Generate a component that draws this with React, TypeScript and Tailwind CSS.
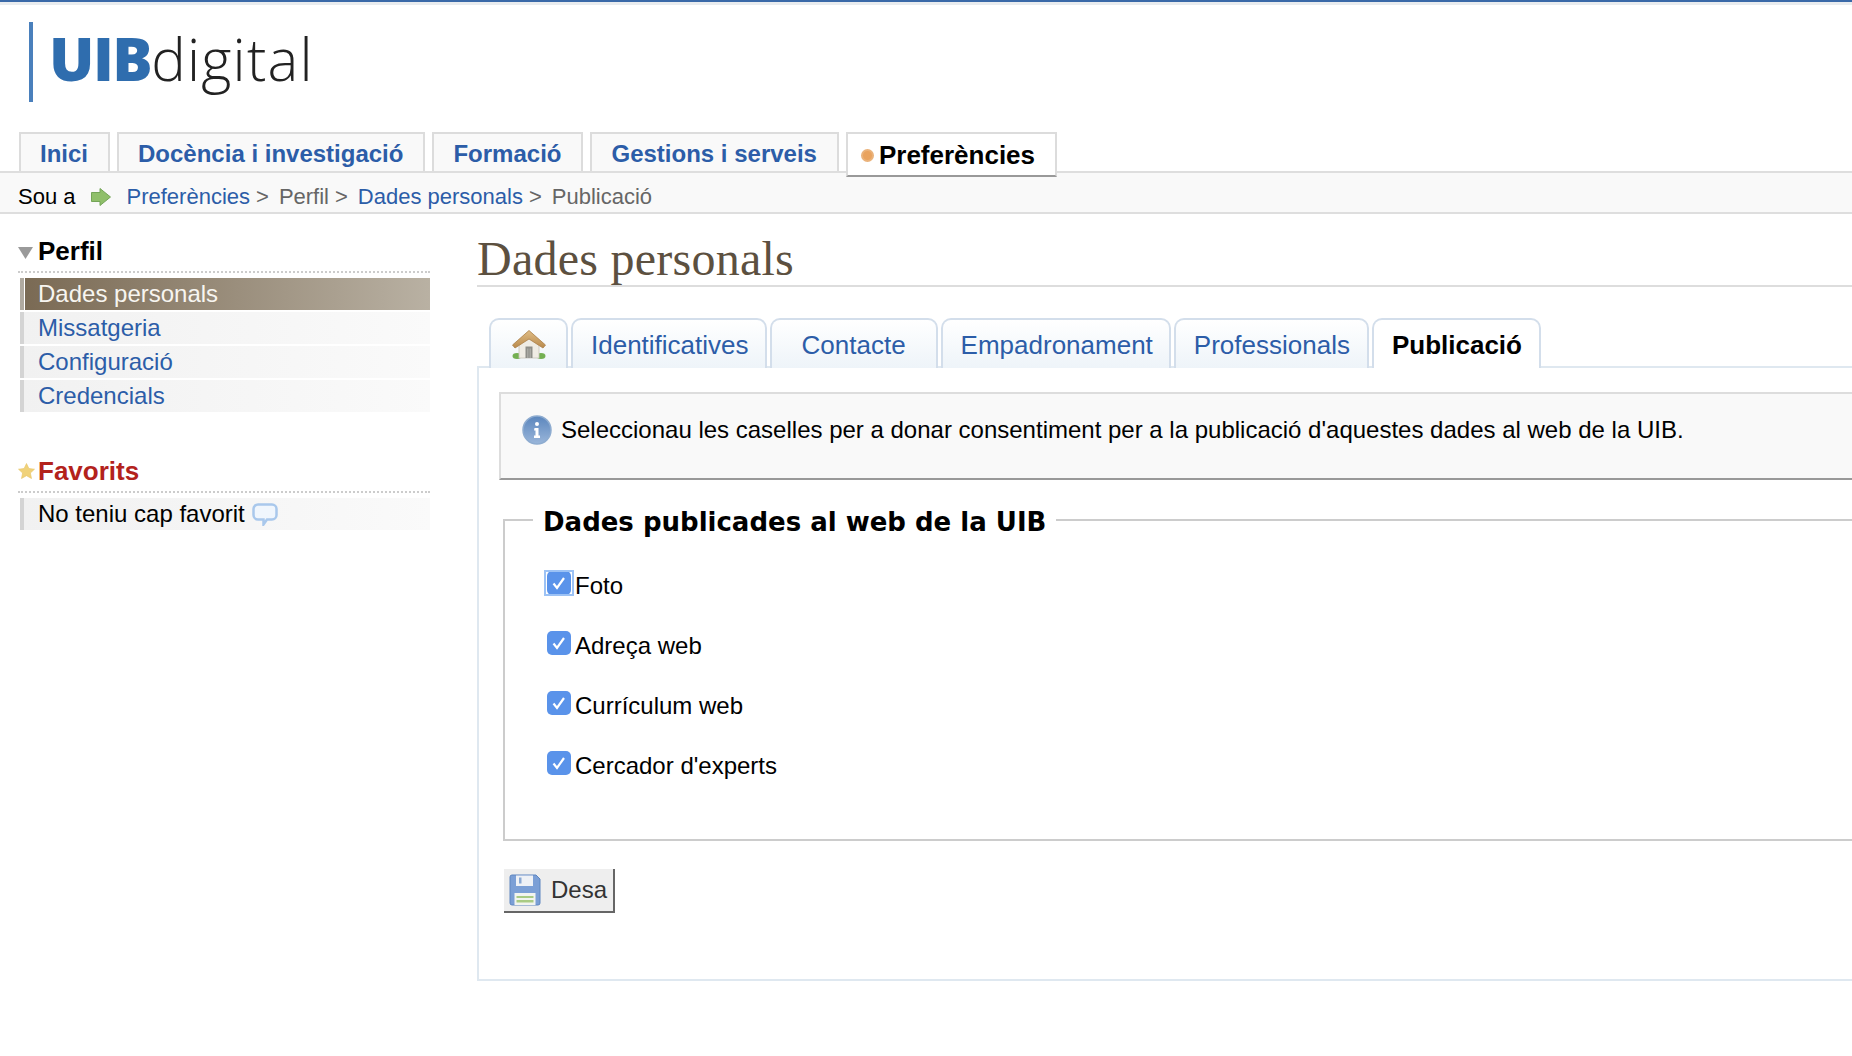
const navTabs = ["Inici", "Docència i investigació", "Formació", "Gestions i serveis"];
const menuItems = ["Missatgeria", "Configuració", "Credencials"];
const subTabs = ["Identificatives", "Contacte", "Empadronament", "Professionals"];
const subTabPadding = ["pl-[18px] pr-[16px]", "px-[30px]", "pl-[18px] pr-[16px]", "pl-[18px] pr-[17px]"];
const checks = ["Foto", "Adreça web", "Currículum web", "Cercador d'experts"];

function ArrowIcon() {
  return (
    <svg width="22" height="20" viewBox="0 0 22 20">
      <path d="M1.500 5.500h8.500V1.500l10.500 8.500-10.500 8.500v-4H1.500z" fill="#8fbf6a" stroke="#74a558" strokeWidth="1" />
    </svg>
  );
}

function HomeIcon() {
  return (
    <svg width="34" height="29" viewBox="0 0 34 29">
      <defs>
        <linearGradient id="roofFill" x1="0" y1="0" x2="0" y2="1">
          <stop offset="0" stopColor="#e0bd86" />
          <stop offset="1" stopColor="#b98a4c" />
        </linearGradient>
      </defs>
      <ellipse cx="5" cy="26" rx="4.500" ry="3" fill="#74b052" />
      <ellipse cx="29" cy="26" rx="4.500" ry="3" fill="#74b052" />
      <path d="M7 12L17 6l10 6v16H7z" fill="#efece4" stroke="#c9c4b8" strokeWidth="0.8" />
      <path d="M13.500 16.500h7V28h-7z" fill="#8e8e88" />
      <path d="M15 18.500h1.500V28H15zM17.500 18.500H19V28h-1.500z" fill="#a8a8a2" />
      <path d="M17 .5L33.500 15 31 18 17 9 3 18 .5 15z" fill="url(#roofFill)" stroke="#ab7f47" strokeWidth="0.8" />
    </svg>
  );
}

function InfoIcon() {
  return (
    <svg width="30" height="30" viewBox="0 0 30 30" className="shrink-0">
      <defs>
        <linearGradient id="infoFill" x1="0" y1="0" x2="0" y2="1">
          <stop offset="0" stopColor="#5b86bd" />
          <stop offset="1" stopColor="#9ab6da" />
        </linearGradient>
      </defs>
      <circle cx="15" cy="15" r="14" fill="url(#infoFill)" stroke="#8eacd0" strokeWidth="1.500" />
      <circle cx="15" cy="9" r="2" fill="#fff" />
      <path d="M12.500 13h4v7.500h1.500V23h-6v-2.500h1.500v-5h-1.500z" fill="#fff" />
    </svg>
  );
}

function StarIcon() {
  return (
    <svg width="17" height="16" viewBox="0 0 17 16">
      <path d="M8.500.5l2.400 5 5.600.7-4.100 3.800 1.100 5.500-5-2.800-5 2.800 1.100-5.500L.5 6.200l5.600-.7z" fill="#f0d27a" stroke="#e8c566" strokeWidth="0.6" />
    </svg>
  );
}

function BubbleIcon() {
  return (
    <svg width="26" height="23" viewBox="0 0 26 23">
      <path d="M6 1.500h14a4.500 4.500 0 0 1 4.500 4.500v6a4.500 4.500 0 0 1-4.500 4.500h-5l-3.500 5v-5H6A4.500 4.500 0 0 1 1.500 12V6A4.500 4.500 0 0 1 6 1.500z" fill="#f0f6fd" stroke="#a9c8ec" strokeWidth="2.500" />
    </svg>
  );
}

function FloppyIcon() {
  return (
    <svg width="32" height="32" viewBox="0 0 32 32">
      <path d="M1 3a2 2 0 0 1 2-2h24l4 4v24a2 2 0 0 1-2 2H3a2 2 0 0 1-2-2z" fill="#7b9fd6" stroke="#5e86c0" strokeWidth="1" />
      <path d="M7 1.500h17V12H7z" fill="#eef1f6" />
      <path d="M10 3.500h2.500v6H10z" fill="#8ba9d4" />
      <path d="M5.500 19h21v12h-21z" fill="#f2f4f0" />
      <path d="M7.500 22h17v2H7.500zM7.500 26h17v2.500H7.500z" fill="#a9cb84" />
    </svg>
  );
}

function CheckBox({ focused }: { focused: boolean }) {
  return (
    <span className="relative flex h-6 w-6 shrink-0 items-center justify-center rounded-[5px] bg-[#5a93ea]">
      {focused && <span className="absolute -inset-x-[3px] -inset-y-[1px] border-2 border-[#9cc2f5]" />}
      <svg width="16" height="16" viewBox="0 0 16 16" className="relative">
        <path d="M2.500 8.500l3.500 4.500 7-10" fill="none" stroke="#fff" strokeWidth="2.200" />
      </svg>
    </span>
  );
}

export default function App() {
  return (
    <div className="h-[1056px] w-[1852px] overflow-hidden bg-white font-['Liberation_Sans',Arial,sans-serif] text-black">
      <div className="h-[2px] bg-[#3a69a8]" />
      <div className="h-[3px] bg-[#e9ecef]" />

      {/* logo */}
      <div className="flex h-[127px] pl-[29px] pt-[17px]">
        <div className="h-20 w-1 bg-[#4a80bc]" />
        <div className="ml-[16px] mt-[-1px] flex h-[74px] items-baseline font-['Open_Sans',sans-serif] leading-[74px] blur-[0.4px]">
          <span className="text-[60px] font-extrabold tracking-[-1.500px] text-[#2f6dae]">UIB</span>
          <span className="text-[58px] font-light tracking-[1.200px] text-[#222]">digital</span>
        </div>
      </div>

      {/* main tabs */}
      <div className="flex h-[39px] gap-[7px] pl-[19px]">
        {navTabs.map((t) => (
          <div
            key={t}
            className="flex items-center border-2 border-b-0 border-[#dcdcdc] bg-[#f9f9f9] pl-[19px] pr-[20px] pt-[3px] text-[24px] font-bold text-[#2c5da8]"
          >
            {t}
          </div>
        ))}
        <div className="relative z-10 flex h-[45px] items-center gap-[5px] border-2 border-[#dcdcdc] border-b-[#999] bg-white pl-[13px] pr-[20px] pt-[2px] text-[26px] font-bold">
          <span className="h-[13px] w-[13px] rounded-full border-2 border-[#eab27a] bg-[#e9a35f]" />
          Preferències
        </div>
      </div>

      {/* breadcrumb */}
      <div className="flex h-[43px] items-center border-y-2 border-[#dedede] bg-[#f9f9f9] pl-[18px] pt-[8px] text-[22px] text-[#666]">
        <span className="text-black">Sou a</span>
        <span className="ml-[14px] mr-[15px] flex"><ArrowIcon /></span>
        <span className="text-[#2c5da8]">Preferències</span>
        <span className="ml-[6px] mr-[10px]">&gt;</span>
        <span>Perfil</span>
        <span className="ml-[6px] mr-[10px]">&gt;</span>
        <span className="text-[#2c5da8]">Dades personals</span>
        <span className="ml-[6px] mr-[10px]">&gt;</span>
        <span>Publicació</span>
      </div>

      <div className="flex">
        {/* sidebar */}
        <div className="ml-[18px] w-[412px] shrink-0">
          <div className="flex h-[59px] items-end border-b-2 border-dotted border-[#ccc] text-[26px] font-bold">
            <svg width="15" height="12" viewBox="0 0 15 12" className="mb-[12px] mr-[5px]">
              <path d="M0 0h15L7.500 12z" fill="#9a9a9a" />
            </svg>
            Perfil
          </div>
          <div className="ml-[2px] mt-[5px] flex flex-col gap-[2px] text-[24px]">
            <div className="flex h-8 items-center border-l-4 border-[#b0aaa0] bg-linear-to-r from-[#7a6a54] to-[#b9b1a3] pl-[14px] text-[#f7f5f0] shadow-[inset_1px_0_0_#fff]">
              Dades personals
            </div>
            {menuItems.map((m) => (
              <div
                key={m}
                className="flex h-8 items-center border-l-4 border-[#d4d4d4] bg-linear-to-r from-[#f1f1f1] to-[#fafafa] pl-[14px] text-[#2c5da8]"
              >
                {m}
              </div>
            ))}
          </div>

          <div className="mt-[45px] flex h-[36px] items-end border-b-2 border-dotted border-[#ccc] text-[26px] font-bold text-[#b3221c]">
            <span className="mb-[12px] mr-[3px] flex"><StarIcon /></span>
            Favorits
          </div>
          <div className="ml-[2px] mt-[5px] flex h-8 items-center border-l-4 border-[#d4d4d4] bg-linear-to-r from-[#f1f1f1] to-[#fafafa] pl-[14px] text-[24px]">
            No teniu cap favorit
            <span className="ml-[7px] flex"><BubbleIcon /></span>
          </div>
        </div>

        {/* content */}
        <div className="ml-[47px] mr-[-40px] flex-1">
          <h1 className="h-[73px] border-b-2 border-[#ddd] pt-[19px] font-['Liberation_Serif',Georgia,serif] text-[48px] leading-[52px] tracking-[0.250px] text-[#5c5040]">
            Dades personals
          </h1>

          <div className="mt-[31px] flex h-[50px] gap-[3px] pl-[12px] text-[26px]">
            <div className="flex w-[79px] items-center justify-center rounded-t-[10px] border-2 border-b-0 border-[#d3deeb] bg-linear-to-b from-white to-[#eef4f9]">
              <HomeIcon />
            </div>
            {subTabs.map((t, i) => (
              <div
                key={t}
                className={
                  "flex items-center justify-center rounded-t-[10px] border-2 border-b-0 border-[#d3deeb] bg-linear-to-b from-white to-[#eef4f9] pt-[2px] text-[#2c5da8] " +
                  subTabPadding[i]
                }
              >
                {t}
              </div>
            ))}
            <div className="relative z-10 flex items-center rounded-t-[10px] border-2 border-b-0 border-[#d3deeb] bg-white pl-[18px] pr-[17px] pt-[2px] font-bold">
              Publicació
            </div>
          </div>

          <div className="-mt-[2px] h-[615px] border-2 border-[#dfe8f0] pl-[20px] pt-[24px]">
            <div className="flex h-[88px] items-start gap-[9px] border-2 border-[#ddd] border-b-[#999] border-r-0 bg-[#f9f9f9] pl-[21px] pt-[21px] text-[24px]">
              <InfoIcon />
              <span className="-mt-[3px]">Seleccionau les caselles per a donar consentiment per a la publicació d'aquestes dades al web de la UIB.</span>
            </div>

            <fieldset className="ml-[4px] mt-[21px] border-2 border-r-0 border-[#ccc] pb-[64px] pl-[42px]">
              <legend className="ml-[-14px] px-[10px] pt-[5px] font-['DejaVu_Sans',Verdana,sans-serif] text-[26px] font-bold leading-[32px]">
                Dades publicades al web de la UIB
              </legend>
              <div className="mt-[33px] flex flex-col gap-9">
                {checks.map((c, i) => (
                  <label key={c} className="flex h-6 items-center gap-[4px] text-[24px]">
                    <CheckBox focused={i === 0} />
                    <span className="mt-[5px]">{c}</span>
                  </label>
                ))}
              </div>
            </fieldset>

            <button className="ml-[5px] mt-[28px] flex h-[44px] w-[111px] items-center gap-[10px] border-b-2 border-r-2 border-[#666] bg-[#eee] pl-[5px] text-[24px] text-[#333]">
              <FloppyIcon />
              Desa
            </button>
          </div>
        </div>
      </div>
    </div>
  );
}
